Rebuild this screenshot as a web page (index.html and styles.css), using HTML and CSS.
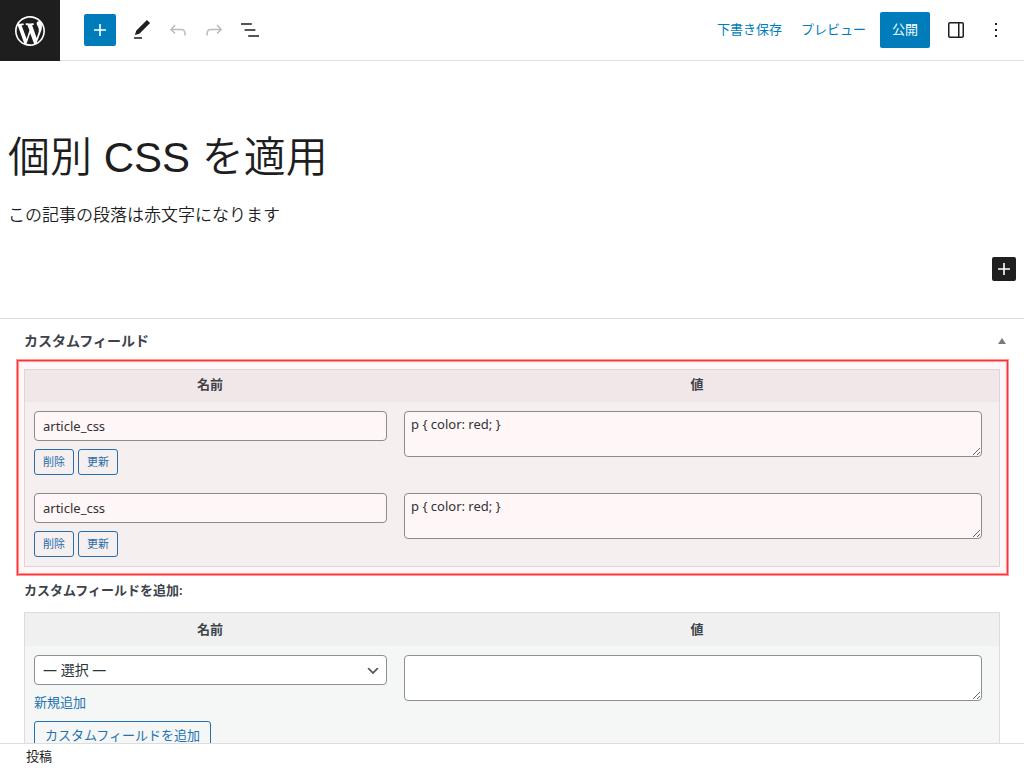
FILE: index.html
```html
<!DOCTYPE html>
<html lang="ja">
<head>
<meta charset="utf-8">
<meta name="viewport" content="width=device-width, initial-scale=1">
<title>個別 CSS を適用</title>
<link rel="stylesheet" href="styles.css">
</head>
<body>
<header class="topbar">
  <a class="site-logo" href="#" aria-label="WordPress">
    <svg viewBox="-2 -2 24 24" width="36" height="36"><path d="M20 10c0-5.51-4.49-10-10-10C4.48 0 0 4.49 0 10c0 5.52 4.48 10 10 10 5.51 0 10-4.48 10-10zM7.78 15.37L4.37 6.22c.55-.02 1.17-.08 1.17-.08.5-.06.44-1.13-.06-1.11 0 0-1.45.11-2.37.11-.18 0-.37 0-.58-.01C4.12 2.69 6.87 1.11 10 1.11c2.33 0 4.45.87 6.05 2.34-.68-.11-1.65.39-1.65 1.58 0 .74.45 1.36.9 2.1.35.61.55 1.36.55 2.46 0 1.49-1.4 5-1.4 5l-3.03-8.37c.54-.02.82-.17.82-.17.5-.05.44-1.25-.06-1.22 0 0-1.44.12-2.38.12-.87 0-2.33-.12-2.33-.12-.5-.03-.56 1.2-.06 1.22l.92.08 1.26 3.41zM17.41 10c.24-.64.74-1.87.43-4.25.7 1.29 1.05 2.71 1.05 4.25 0 3.29-1.73 6.24-4.4 7.78.97-2.59 1.94-5.2 2.92-7.78zM6.1 18.09C3.12 16.65 1.11 13.53 1.11 10c0-1.3.23-2.48.72-3.59C3.25 10.3 4.67 14.2 6.1 18.09zm4.03-6.63l2.58 6.98c-.86.29-1.76.45-2.71.45-.79 0-1.57-.11-2.29-.33.81-2.38 1.62-4.74 2.42-7.1z"/></svg>
  </a>
  <div class="tools">
    <button class="inserter" type="button" aria-label="ブロック挿入"><svg viewBox="0 0 24 24" width="24" height="24"><path d="M18 11.2h-5.2V6h-1.6v5.2H6v1.6h5.2V18h1.6v-5.2H18z"/></svg></button>
    <button class="tool" type="button" aria-label="ツール"><svg viewBox="0 0 24 24" width="24" height="24"><path d="M20.1 5.1L16.9 2 6.2 12.7l-1.3 4.4 4.5-1.3L20.1 5.1zM4 20.8h8v-1.5H4v1.5z"/></svg></button>
    <button class="tool tool-off" type="button" aria-label="元に戻す"><svg viewBox="0 0 24 24" width="24" height="24"><path d="M18.3 11.7c-.6-.6-1.4-.9-2.3-.9H6.7l2.9-3.3-1.1-1-4.5 5L8.5 16l1-1-2.7-2.7H16c.5 0 .9.2 1.3.5 1 1 1 3.4 1 4.5v.3h1.5v-.2c0-1.5 0-4.3-1.5-5.7z"/></svg></button>
    <button class="tool tool-off" type="button" aria-label="やり直す"><svg viewBox="0 0 24 24" width="24" height="24"><path d="M15.6 6.5l-1.1 1 2.9 3.3H8c-.9 0-1.7.3-2.3.9-1.4 1.5-1.4 4.2-1.4 5.6v.2h1.5v-.3c0-1.1 0-3.5 1-4.5.3-.3.7-.5 1.3-.5h9.2L14.5 15l1.1 1.1 4.6-4.6-4.6-5z"/></svg></button>
    <button class="tool" type="button" aria-label="リスト表示"><svg viewBox="0 0 24 24" width="24" height="24"><path d="M13.8 5.2H3v1.5h10.8V5.2zm-3.6 12v1.5H21v-1.5H10.2zm7.2-6H6.6v1.5h10.8v-1.5z"/></svg></button>
  </div>
  <div class="actions">
    <button class="text-button" type="button">下書き保存</button>
    <button class="text-button" type="button">プレビュー</button>
    <button class="publish" type="button">公開</button>
    <button class="panel-button" type="button" aria-label="設定"><svg viewBox="0 0 24 24" width="24" height="24"><path fill-rule="evenodd" d="M18 4H6c-1.1 0-2 .9-2 2v12c0 1.1.9 2 2 2h12c1.1 0 2-.9 2-2V6c0-1.1-.9-2-2-2zm-4 14.500H6c-.3 0-.5-.2-.5-.5V6c0-.3.2-.5.5-.5h8v13zm4.500-.5c0 .3-.2.5-.5.5h-2.500v-13H18c.3 0 .5.2.5.5v12z"/></svg></button>
    <button class="panel-button" type="button" aria-label="オプション"><svg viewBox="0 0 24 24" width="24" height="24"><path d="M13 19h-2v-2h2v2zm0-6h-2v-2h2v2zm0-6h-2V5h2v2z"/></svg></button>
  </div>
</header>

<main class="editor">
  <h1 class="post-title">個別 CSS を適用</h1>
  <p class="paragraph">この記事の段落は赤文字になります</p>
  <button class="block-adder" type="button" aria-label="ブロックを追加"><svg viewBox="0 0 24 24" width="24" height="24"><path d="M18 11.2h-5.2V6h-1.6v5.2H6v1.6h5.2V18h1.6v-5.2H18z"/></svg></button>
</main>

<section class="metabox">
  <div class="metabox-head">
    <h2 class="metabox-title">カスタムフィールド</h2>
    <button class="toggle" type="button" aria-label="パネルを切り替え"><svg viewBox="0 0 8 6" width="8" height="6"><path d="M4 0l4 6H0z"/></svg></button>
  </div>
  <div class="highlight">
    <table class="fields">
      <thead><tr><th class="col-name">名前</th><th>値</th></tr></thead>
      <tbody>
        <tr>
          <td><input class="key" type="text" value="article_css" aria-label="キー"><div class="row-buttons"><button class="small-button" type="button">削除</button><button class="small-button" type="button">更新</button></div></td>
          <td class="value-cell"><textarea class="value" aria-label="値" spellcheck="false">p { color: red; }</textarea></td>
        </tr>
        <tr>
          <td><input class="key" type="text" value="article_css" aria-label="キー"><div class="row-buttons"><button class="small-button" type="button">削除</button><button class="small-button" type="button">更新</button></div></td>
          <td class="value-cell"><textarea class="value" aria-label="値" spellcheck="false">p { color: red; }</textarea></td>
        </tr>
      </tbody>
    </table>
  </div>
  <p class="add-title">カスタムフィールドを追加:</p>
  <table class="fields fields-new">
    <thead><tr><th class="col-name"><label for="metakey">名前</label></th><th><label for="metavalue">値</label></th></tr></thead>
    <tbody>
      <tr>
        <td>
          <div class="select-wrap">
            <select class="key" id="metakey"><option>— 選択 —</option></select>
            <svg class="chevron" viewBox="0 0 20 20" width="16" height="16"><path d="M5 6l5 5 5-5 2 1-7 7-7-7 2-1z"/></svg>
          </div>
          <a class="new-link" href="#">新規追加</a>
          <button class="add-button" type="button">カスタムフィールドを追加</button>
        </td>
        <td class="value-cell"><textarea class="value" id="metavalue"></textarea></td>
      </tr>
    </tbody>
  </table>
</section>

<footer class="footer">投稿</footer>
</body>
</html>
```
FILE: styles.css
```css
* { box-sizing: border-box; }

body {
  margin: 0;
  height: 100vh;
  display: flex;
  flex-direction: column;
  overflow: hidden;
  background: #fff;
  color: #1e1e1e;
  font-family: "Noto Sans", "Noto Sans CJK JP", sans-serif;
  font-size: 13px;
  line-height: 20px;
}

button, input, textarea, select { font: inherit; margin: 0; }
button { padding: 0; border: 0; background: none; color: inherit; }
svg { display: block; fill: currentColor; }

.topbar {
  flex: none;
  display: flex;
  align-items: stretch;
  justify-content: space-between;
  height: 61px;
  border-bottom: 1px solid #e0e0e0;
}
.site-logo {
  display: flex;
  align-items: center;
  justify-content: center;
  width: 60px;
  height: 61px;
  background: #1e1e1e;
  color: #fff;
}
.tools {
  flex: 1;
  display: flex;
  align-items: center;
  gap: 12px;
  padding-left: 24px;
}
.inserter {
  display: flex;
  align-items: center;
  justify-content: center;
  width: 32px;
  height: 32px;
  margin-right: 2px;
  border-radius: 2px;
  background: #007cba;
  color: #fff;
}
.tool-off { color: #bbb; }
.actions { display: flex; align-items: center; }
.text-button { margin-right: 19px; padding-bottom: 2px; color: #007cba; }
.text-button + .publish { margin-left: -5px; }
.publish {
  height: 36px;
  padding: 0 12px 2px;
  border-radius: 2px;
  background: #007cba;
  color: #fff;
}
.panel-button { margin-left: 14px; }
.panel-button:last-child { margin: 0 16px; }

.editor {
  flex: none;
  display: flex;
  flex-direction: column;
  padding: 66px 8px 37px;
  font-family: "Liberation Sans", "Noto Sans CJK JP", sans-serif;
  font-weight: 350;
}
.post-title {
  margin: 0;
  font-size: 42px;
  font-weight: 350;
  line-height: 62px;
}
.paragraph { margin: 14px 0 28px; font-size: 17px; line-height: 26px; }
.block-adder {
  align-self: flex-end;
  border-radius: 2px;
  background: #1e1e1e;
  color: #fff;
}

.metabox {
  flex: 1;
  min-height: 0;
  overflow: hidden;
  padding: 0 24px;
  border-top: 1px solid #ddd;
  color: #3c434a;
}
.metabox-head {
  display: flex;
  align-items: center;
  justify-content: space-between;
  height: 50px;
  padding-bottom: 6px;
}
.metabox-title { margin: 0; font-size: 14px; font-weight: 600; }
.toggle { margin-right: -6px; color: #787c82; }

.highlight { position: relative; }
.highlight::after {
  content: "";
  position: absolute;
  inset: -9px -8px -8px -7px;
  border: 1px solid #ff3333;
  box-shadow: 0 0 0 1px #ff9999, inset 0 0 0 1px #ff9999;
  background: rgba(255, 0, 0, 0.03);
  pointer-events: none;
}

.fields {
  width: 100%;
  table-layout: fixed;
  border: 1px solid #dcdcde;
  border-collapse: separate;
  border-spacing: 0;
  background: #f5f7f7;
}
.fields th {
  height: 32px;
  padding: 0 8px 4px;
  background: #f0f0f0;
  font-weight: 600;
}
.fields .col-name { width: 38%; }
.fields td { padding: 9px 8px 9px 9px; vertical-align: top; }
.fields .value-cell { padding-right: 17px; }
.fields-new th { height: 33px; padding-bottom: 2px; }

.key {
  display: block;
  width: 100%;
  height: 30px;
  padding: 0 8px;
  border: 1px solid #8c8f94;
  border-radius: 4px;
  background: #fff;
  color: #2c3338;
  font-size: 13px;
}
select.key { appearance: none; font-size: 14px; }
.value {
  display: block;
  width: 100%;
  height: 46px;
  padding: 2px 6px;
  border: 1px solid #8c8f94;
  border-radius: 4px;
  background: #fff;
  color: #2c3338;
  resize: vertical;
}
.row-buttons { display: flex; gap: 4px; margin-top: 8px; }
.small-button {
  height: 26px;
  padding: 0 8px;
  border: 1px solid #2271b1;
  border-radius: 3px;
  color: #2271b1;
  font-size: 11px;
}
.add-title { margin: 13px 0 12px; font-weight: 600; }
.select-wrap { position: relative; }
.chevron {
  position: absolute;
  top: 8px;
  right: 6px;
  color: #50575e;
  pointer-events: none;
}
.new-link {
  display: block;
  margin: 7px 0 9px;
  color: #2271b1;
  text-decoration: none;
}
.add-button {
  height: 30px;
  padding: 0 10px 2px;
  border: 1px solid #2271b1;
  border-radius: 3px;
  color: #2271b1;
}

.footer {
  flex: none;
  height: 25px;
  padding: 2px 26px;
  border-top: 1px solid #ddd;
}
```
